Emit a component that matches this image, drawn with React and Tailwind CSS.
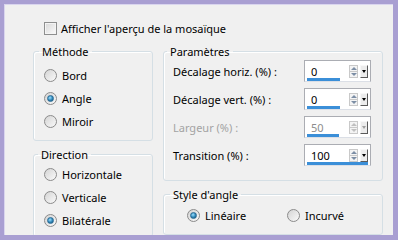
import React from 'react'

const font = { fontFamily: '"Segoe UI", "Noto Sans", Arial, sans-serif' }

const Radio = ({ checked }) => (
  <span className="flex h-[13px] w-[13px] shrink-0 items-center justify-center rounded-full border border-[#8b8b8b] bg-gradient-to-br from-[#d4d4d4] to-[#fafafa]">
    {checked && (
      <span className="h-[7px] w-[7px] rounded-full border border-[#2a6b94] bg-[radial-gradient(circle_at_40%_35%,#9be0ff,#2f86b8_55%,#134a6e)]" />
    )}
  </span>
)

const RadioRow = ({ label, checked, className = '' }) => (
  <div className={`flex items-center gap-[5px] ${className}`}>
    <Radio checked={checked} />
    <span>{label}</span>
  </div>
)

const Spinner = ({ disabled }) => (
  <div className="ml-auto flex items-center gap-[2px] pr-[2px]">
    <div className="flex h-[13px] w-[9px] flex-col border border-[#c9c9c9] bg-[#f4f4f4]">
      <div className="flex flex-1 items-center justify-center border-b border-[#c9c9c9]">
        <span className={`h-0 w-0 border-x-[3px] border-b-[3px] border-x-transparent ${disabled ? 'border-b-[#c0c0c0]' : 'border-b-[#7c8ea5]'}`} />
      </div>
      <div className="flex flex-1 items-center justify-center">
        <span className={`h-0 w-0 border-x-[3px] border-t-[3px] border-x-transparent ${disabled ? 'border-t-[#c0c0c0]' : 'border-t-[#7c8ea5]'}`} />
      </div>
    </div>
    <div className="flex h-[13px] w-[8px] items-center justify-center border border-[#f8f8f8] border-r-[#5a5a5a] border-b-[#5a5a5a] bg-[#ececec]">
      <span className={`h-0 w-0 border-x-[2px] border-t-[3px] border-x-transparent ${disabled ? 'border-t-[#a0a0a0]' : 'border-t-black'}`} />
    </div>
  </div>
)

const Field = ({ label, value, barClass, disabled }) => (
  <div className="flex h-[22px] items-center justify-between">
    <span className={disabled ? 'text-[#a3a3a3]' : 'text-black'}>{label}</span>
    <div className="relative flex h-[22px] w-[67px] items-center border border-[#abadb3] border-b-[#dbdfe6] bg-white">
      <span className={`pl-[6px] ${disabled ? 'text-[#8d8d8d]' : 'text-black'}`}>{value}</span>
      <Spinner disabled={disabled} />
      <span className={`absolute bottom-0 left-[2px] h-[3px] bg-[#3b8fd8] ${barClass}`} />
    </div>
  </div>
)

export default function App() {
  return (
    <div className="h-[240px] w-[398px] bg-[#a99fd2] pt-[4px] pl-[4px] pr-[5px] pb-[5px]" style={font}>
      <div className="h-full w-full overflow-hidden border-l border-t border-[#d9d5ee] bg-[#f0f0f0] text-[11px] leading-[15px] text-black">
        <div className="flex items-center gap-[4px] pl-[39px] pt-[16px]">
          <span className="h-[13px] w-[13px] border border-[#8e8f8f] bg-gradient-to-br from-[#d8d8d8] to-[#fbfbfb] shadow-[inset_0_0_0_1px_#f4f4f4]" />
          <span>Afficher l'aperçu de la mosaïque</span>
        </div>

        <div className="mt-[8px] flex gap-[10px] pl-[28px]">
          <div className="flex w-[120px] flex-col gap-[6px]">
            <fieldset className="h-[97px] rounded-[3px] border border-[#d5dfe5] pl-[5px] shadow-[inset_1px_1px_0_#ffffff]">
              <legend className="px-[3px]">Méthode</legend>
              <div className="flex flex-col gap-[8px] pl-[5px] pt-[9px]">
                <RadioRow label="Bord" />
                <RadioRow label="Angle" checked />
                <RadioRow label="Miroir" />
              </div>
            </fieldset>
            <fieldset className="h-[90px] rounded-[3px] border border-[#d5dfe5] pl-[4px] shadow-[inset_1px_1px_0_#ffffff]">
              <legend className="px-[3px]">Direction</legend>
              <div className="flex flex-col gap-[8px] pl-[6px] pt-[5px]">
                <RadioRow label="Horizontale" />
                <RadioRow label="Verticale" />
                <RadioRow label="Bilatérale" checked />
              </div>
            </fieldset>
          </div>

          <div className="flex w-[220px] flex-col gap-[6px]">
            <fieldset className="h-[137px] rounded-[3px] border border-[#d5dfe5] pl-[3px] shadow-[inset_1px_1px_0_#ffffff]">
              <legend className="px-[3px]">Paramètres</legend>
              <div className="flex flex-col gap-[6px] pl-[6px] pr-[11px] pt-[1px]">
                <Field label="Décalage horiz. (%) :" value="0" barClass="w-[33px]" />
                <Field label="Décalage vert. (%) :" value="0" barClass="w-[33px]" />
                <Field label="Largeur (%) :" value="50" barClass="w-[32px]" disabled />
                <Field label="Transition (%) :" value="100" barClass="w-[61px]" />
              </div>
            </fieldset>
            <fieldset className="h-[48px] rounded-[3px] border border-[#d5dfe5] pl-[6px] shadow-[inset_1px_1px_0_#ffffff]">
              <legend className="px-[3px]">Style d'angle</legend>
              <div className="flex pl-[17px] pt-[6px]">
                <RadioRow label="Linéaire" checked className="w-[100px]" />
                <RadioRow label="Incurvé" />
              </div>
            </fieldset>
          </div>
        </div>
      </div>
    </div>
  )
}
